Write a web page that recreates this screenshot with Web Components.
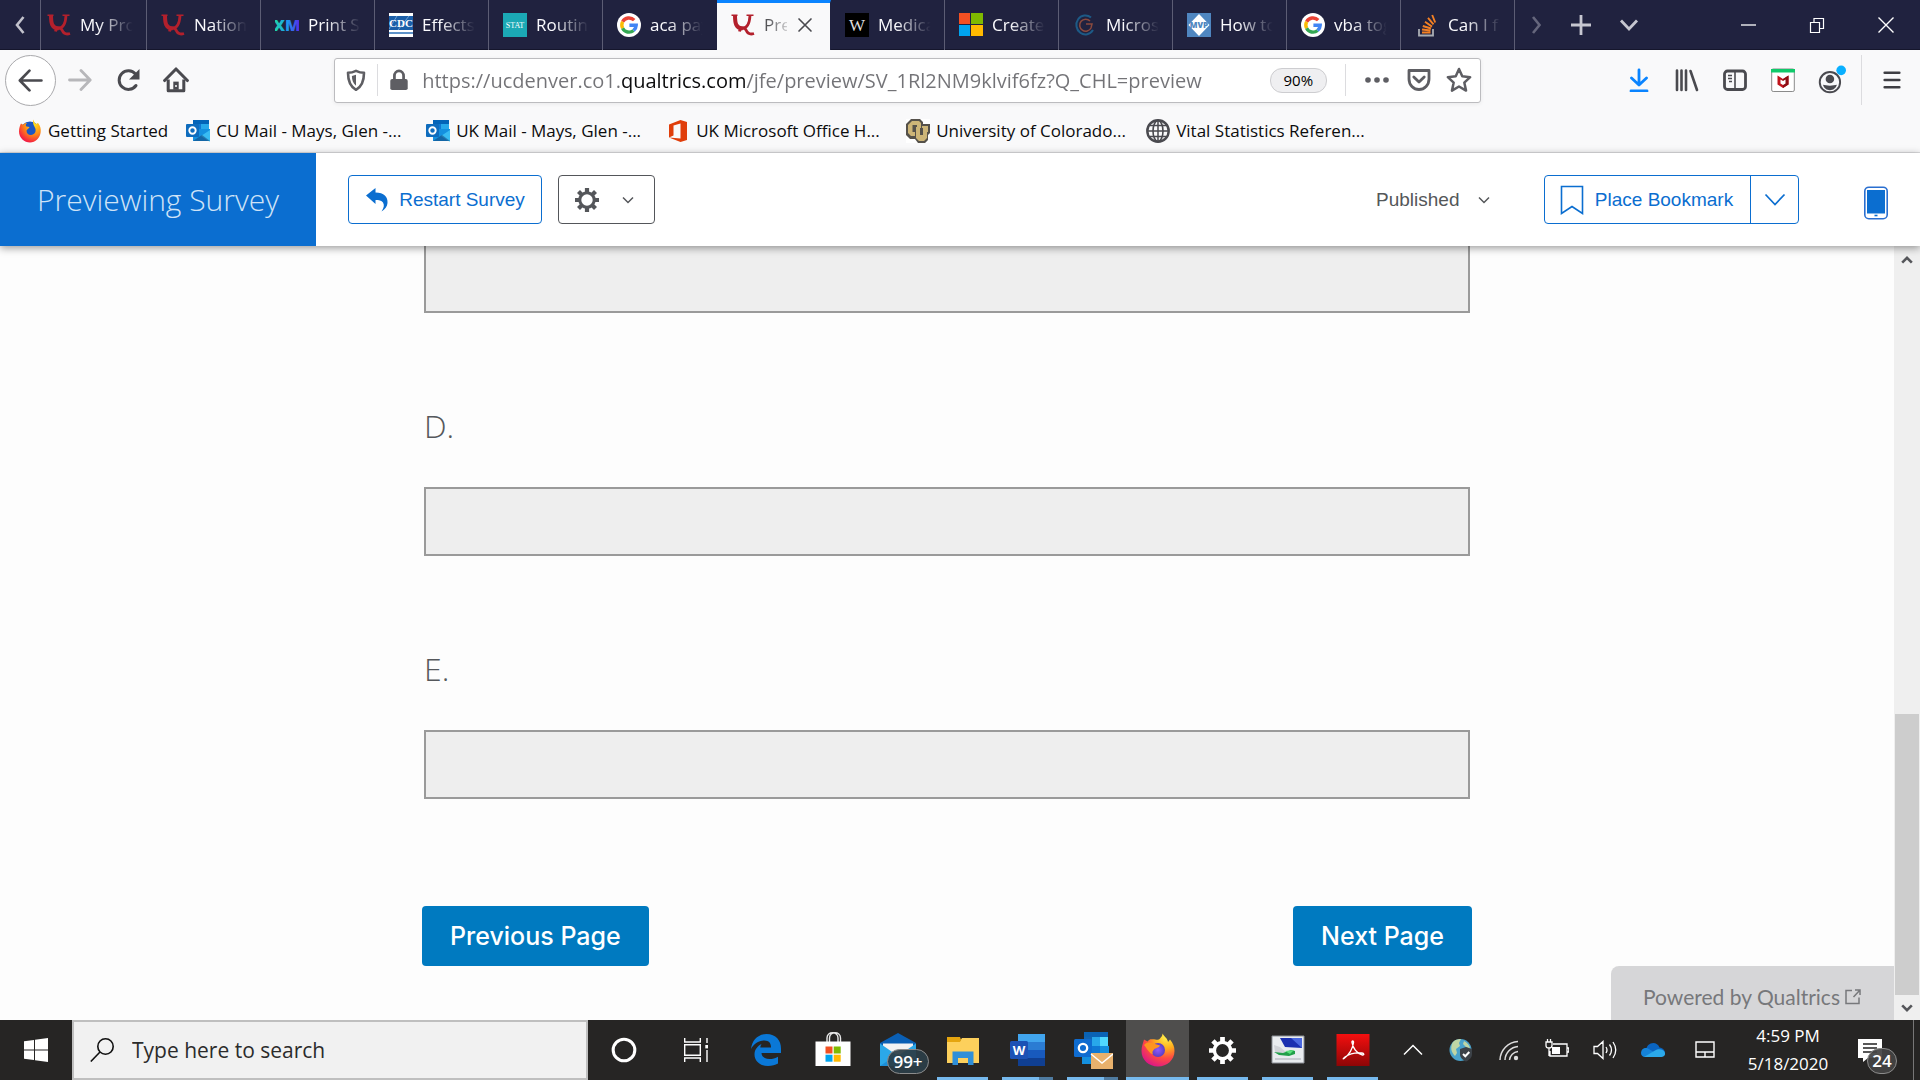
<!DOCTYPE html>
<html lang="en">
<head>
<meta charset="utf-8">
<title>Previewing Survey</title>
<style>
html, body { margin: 0; height: 100%; }
body { font-family: "Open Sans", "Noto Sans", sans-serif; background: #fdfdfd; overflow: hidden; }
</style>
</head>
<body>
<desktop-screen></desktop-screen>
<script>
const GOOGLE = `<circle cx="12" cy="12" r="12" fill="#fff"/><g fill="none" stroke-width="3.4"><path d="M17.2 7.2A7.2 7.2 0 0 0 5.6 8.8" stroke="#ea4335"/><path d="M5.6 8.8a7.2 7.2 0 0 0 0 6.4" stroke="#fbbc05"/><path d="M5.6 15.2a7.2 7.2 0 0 0 11 2.3" stroke="#34a853"/><path d="M16.6 17.5a7.2 7.2 0 0 0 2.6-5.2H12.4" stroke="#4285f4"/></g>`;
const QUAL = `<g fill="none" stroke="#b3202c"><path d="M.5 2.200h6M15.500 2.200h7" stroke-width="1.400"/><path d="M4 2.500c0 8 1 12.500 7.500 13" stroke-width="4"/><path d="M11 15.500c5 0 7.500-4.500 8-13" stroke-width="2.800"/><path d="M8.500 18.500c.5-4.500 5-4.500 6.500-1.500 1.500 3.500 3.500 5 8 3.500" stroke-width="2.800"/></g>`;
const OUTLOOK = `<path d="M7 1h16v10H7z" fill="#0364b8"/><path d="M7 5h8v6H7z" fill="#0f78d4"/><path d="M15 5h8v6h-8z" fill="#28a8ea"/><path d="M7 10h17v12H7z" fill="#1490df"/><path d="M24 11l-9 6 9 6z" fill="#50d9ff" opacity=".6"/><path d="M7 22l9-6 8 6z" fill="#123b6d" opacity=".5"/><rect x="0" y="5" width="13" height="13" rx="1" fill="#0f6cbd"/><circle cx="6.500" cy="11.500" r="3.200" fill="none" stroke="#fff" stroke-width="1.900"/>`;
const ICONS = {
  qualtrics: [24, QUAL],
  google: [24, GOOGLE],
  xm: [24, `<defs><linearGradient id="g"><stop offset="0" stop-color="#21dba0"/><stop offset=".5" stop-color="#1b9df0"/><stop offset="1" stop-color="#5a1fe8"/></linearGradient></defs><text x="12" y="18" text-anchor="middle" font-family="Open Sans" font-weight="800" font-size="16" fill="url(#g)">XM</text>`],
  cdc: [24, `<path fill="#fff" d="M0 0h24v24H0z"/><path fill="#1b5ea8" d="M0 3h24v14H0z"/><path fill="#5e93c9" d="M0 19h24v2H0z"/><path d="M0 16L8 3M9 17L20 3" stroke="#7fb0e0" stroke-width=".8"/><text x="12" y="13.500" text-anchor="middle" font-family="Liberation Serif" font-weight="700" font-size="11" fill="#fff">CDC</text>`],
  stat: [24, `<path fill="#1ba9b5" d="M0 0h24v24H0z"/><text x="12" y="15" text-anchor="middle" font-family="Liberation Serif" font-size="8" fill="#fff">STAT</text>`],
  w: [24, `<path fill="#000" d="M0 0h24v24H0z"/><text x="12" y="17.500" text-anchor="middle" font-family="Liberation Serif" font-size="17" fill="#ddd">W</text>`],
  microsoft: [24, `<path fill="#f25022" d="M0 0h11v11H0z"/><path fill="#7fba00" d="M12 0h12v11H12z"/><path fill="#00a4ef" d="M0 12h11v11H0z"/><path fill="#ffb900" d="M12 12h12v11H12z"/>`],
  swirl: [24, `<g fill="none" stroke-width="2"><path d="M18 4.500A9 9.500 0 1 0 20 17" stroke="#1d5a86"/><path d="M17 8a6 6 0 1 0 1 7l1-4h-6" stroke="#8a4a3e" stroke-width="1.500"/></g>`],
  mvp: [24, `<path fill="#4f86c0" d="M0 0h24v24H0z"/><path fill="#fff" d="M12 1l10.500 11L12 23 1.500 12z"/><text x="12" y="15" text-anchor="middle" font-family="Open Sans" font-weight="800" font-size="8" fill="#4f86c0">MVP</text>`],
  stack: [24, `<path d="M4 16v6.500h14V16" fill="none" stroke="#a9adb3" stroke-width="1.800"/><path d="M7 19.500h8.500M7 16.500l8.500 1M7.800 13l8.200 2.500M10 8.800l7 4.800M13 4.800l5.500 6.500M17.200 2l3 7.500" stroke="#f48024" stroke-width="1.900"/>`],
  left: [24, `<path d="M15.500 4L9 12l6.500 8" fill="none" stroke="#c2c2cc" stroke-width="2.600"/>`],
  right: [24, `<path d="M8 4l6.500 8L8 20" fill="none" stroke="#65667c" stroke-width="2.600"/>`],
  plus: [24, `<path d="M12 2v20M2 12h20" stroke="#c6c6d0" stroke-width="2.800"/>`],
  down: [24, `<path d="M4 7.500l8 8.500 8-8.500" fill="none" stroke="#c6c6d0" stroke-width="2.800"/>`],
  min: [24, `<path d="M5 12h15" stroke="#fff" stroke-width="1.300"/>`],
  restore: [24, `<path d="M5.500 9.500h9v10h-9zM9 9V5.500h9.500v10H15" fill="none" stroke="#fff" stroke-width="1.200"/>`],
  close: [24, `<path d="M4.500 4.500l15 15M19.500 4.500l-15 15" stroke="#fff" stroke-width="1.400"/>`],
  tabclose: [24, `<path d="M4 4l16 16M20 4L4 20" stroke="#4a4a4f" stroke-width="2.200" stroke-linecap="round"/>`],
  back: [24, `<path d="M22.500 12H2.500M11 2.500L1.800 12l9.200 9.500" fill="none" stroke="#4a4a4f" stroke-width="2.600" stroke-linecap="round" stroke-linejoin="round"/>`],
  fwd: [24, `<path d="M1.500 12h20M13 2.500l9.200 9.500-9.200 9.500" fill="none" stroke="#b7b7ba" stroke-width="2.800" stroke-linecap="round" stroke-linejoin="round"/>`],
  reload: [24, `<path d="M20 17.500A9.300 9.300 0 1 1 19.500 6" fill="none" stroke="#4a4a4f" stroke-width="3" stroke-linecap="round"/><path d="M23.500 1v10.500H13z" fill="#4a4a4f"/>`],
  home: [24, `<path d="M1.500 12.500L12 1.800l10.500 10.700" fill="none" stroke="#4a4a4f" stroke-width="2.800" stroke-linecap="round" stroke-linejoin="round"/><path d="M4.800 11.500V22h14.400V11.500" fill="none" stroke="#4a4a4f" stroke-width="2.800" stroke-linejoin="round"/><path d="M9.500 13.500h5V21h-5z" fill="#4a4a4f"/><circle cx="12" cy="17.500" r=".9" fill="#fff"/>`],
  shield: [24, `<path d="M12 2.800c3 1.500 5.500 2 8 2 0 8-1.500 13.500-8 17-6.500-3.500-8-9-8-17 2.500 0 5-.5 8-2z" fill="none" stroke="#5e5e63" stroke-width="2.600" stroke-linejoin="round"/><path d="M12 6.800v11c-3-2.500-4-5.500-4.100-9.800z" fill="#5e5e63"/>`],
  lock: [24, `<rect x="2.500" y="11" width="19" height="12" rx="2" fill="#5e5e63"/><path d="M7 12V7.500a5 5.500 0 0 1 10 0V12" fill="none" stroke="#5e5e63" stroke-width="3"/>`],
  dots: [24, `<g fill="#5e5e63"><circle cx="3" cy="12" r="2.800"/><circle cx="12" cy="12" r="2.800"/><circle cx="21" cy="12" r="2.800"/></g>`],
  pocket: [24, `<path d="M2 2.500h20v8.500a10 10.500 0 0 1-20 0z" fill="none" stroke="#5e5e63" stroke-width="2.800" stroke-linejoin="round"/><path d="M6.800 9l5.200 5 5.200-5" fill="none" stroke="#5e5e63" stroke-width="2.800" stroke-linecap="round" stroke-linejoin="round"/>`],
  star: [24, `<path d="M12 1.800l3 6.800 7.300.8-5.400 5 1.600 7.400L12 18l-6.500 3.800 1.600-7.400-5.400-5 7.300-.8z" fill="none" stroke="#5e5e63" stroke-width="2.300" stroke-linejoin="round"/>`],
  download: [24, `<path d="M12 2v14M4.500 10l7.500 7 7.500-7M4 23h16" fill="none" stroke="#0a84ff" stroke-width="2.800" stroke-linecap="round" stroke-linejoin="round"/>`],
  library: [24, `<path d="M2 2.500v19.500M6.500 2.500v19.500M11 2.500v19.500M15.500 3l6.500 19" stroke="#4a4a4f" stroke-width="2.600" stroke-linecap="round"/>`],
  sidebar: [24, `<rect x="1.500" y="3" width="21" height="18.500" rx="3" fill="none" stroke="#4a4a4f" stroke-width="2.800"/><path d="M12 3v18M5 7.500h4M5 10.500h4M6 13.500h3" stroke="#4a4a4f" stroke-width="1.600"/>`],
  mcafee: [24, `<rect x=".7" y="1" width="22.600" height="22.500" rx="1.500" fill="#fff" stroke="#8b8b8b"/><path d="M0 1h24v3.500H0z" fill="#10c96a"/><path d="M6.500 7.500L12 11l5.500-3.500v9L12 20l-5.500-3.500z" fill="#c0141c"/><path d="M12 11l5.500-3.500v9L12 20z" fill="#8e0e14"/><path d="M9.500 11.500l2.500 1.600 2.500-1.600v4l-2.500 1.500-2.500-1.500z" fill="#fff"/>`],
  account: [28, `<circle cx="13" cy="16" r="9.500" fill="none" stroke="#4a4a4f" stroke-width="1.800"/><circle cx="13" cy="13" r="4" fill="#4a4a4f"/><path d="M6.500 18.500c3 1 10 1 13 0-1 3.500-3.500 5-6.500 5s-5.500-1.500-6.500-5z" fill="#4a4a4f"/><circle cx="23.500" cy="5" r="4.500" fill="#0ab0ff"/>`],
  menu: [24, `<path d="M4 4h16M4 12h16M4 20h16" stroke="#3e3e43" stroke-width="2.800" stroke-linecap="round"/>`],
  firefox: [34, `<defs><radialGradient id="f" cx=".75" cy=".1" r="1"><stop offset="0" stop-color="#fff44f"/><stop offset=".35" stop-color="#ffae1c"/><stop offset=".65" stop-color="#ff4a42"/><stop offset="1" stop-color="#d9138c"/></radialGradient><radialGradient id="p"><stop offset="0" stop-color="#9059ff"/><stop offset="1" stop-color="#5b3ec2"/></radialGradient></defs><path d="M21.500.5c1.500 3 5 4.500 5.500 8.500l2-2.500c3 3.500 4.500 7 4.500 11.500C33.500 27 26 33.500 17 33.500S.5 27 .5 18c0-4.500 1.500-8 2.500-11.500l3.500 2C8 6.500 9.500 6 11 6.200c4-.2 5.500 2 8-.7 1.500-1.500 2.500-3 2.500-5z" fill="url(#f)"/><circle cx="17" cy="17" r="7" fill="url(#p)"/><path d="M3 12c4-4 8-2 11-1l5 1.500c-1 2.500-4 2-6 4-1.500 1.500-2 3-1 5-4-1.500-6-6-9-9.500z" fill="#ff9420"/>`],
  ffold: [24, `<defs><radialGradient id="f" cx=".7" cy=".2" r="1"><stop offset="0" stop-color="#ffe21f"/><stop offset=".45" stop-color="#ff8a16"/><stop offset=".8" stop-color="#f5233f"/><stop offset="1" stop-color="#d4116c"/></radialGradient></defs><circle cx="12" cy="12.500" r="10" fill="#1b57c4"/><path d="M15 .5c1 2 1.500 3 3 4.500l2-1c2.500 3 3 6 2.700 9C22 19 17.500 23.500 12 23.500S1 19 1 12.500C1 9 2 6.500 3 4.500l2 1.200c1-1 2.300-1.700 4-1.700-1.500 1.200-1.500 2.500-.5 3.500l3 .5c-.5 1.500-2 1.700-3 3.500 0 3 2 4.700 4.500 4.500 3.500-.3 5-3 4.500-6-.3-2-3-4-2.500-9.500z" fill="url(#f)"/>`],
  outlook: [24, OUTLOOK],
  office: [24, `<path d="M3 5.500L14.500 1 21 3v18l-6.500 2L3 18.500l11.500 1V4.500L7.500 6.500v10L3 18.500z" fill="#e03e0b"/>`],
  cu: [24, `<path d="M0 0h24v24H0z" fill="#fff"/><path d="M5 0h9l3 3v2h7v9l-2 2v5l-3 3h-7l-3-4H4l-4-4V5z" fill="#55514a"/><path d="M6 2h7l2 2v5h-4V6H6.500v7H9v4H5l-3-3V6z" fill="#cdb577"/><path d="M10 8h4v8h3V9h-1V7h6v6h-1v6l-3 3h-5l-3-3z" fill="#cdb577"/>`],
  globe: [24, `<g fill="none" stroke="#4a4a4f"><circle cx="12" cy="12" r="10.700" stroke-width="2.400"/><ellipse cx="12" cy="12" rx="5" ry="10.500" stroke-width="1.600"/><path d="M12 1v22M1.500 12h21M3.500 6.500h17M3.500 17.500h17" stroke-width="1.500"/></g>`],
  undo: [24, `<path d="M1 7.500L10.500 0v4.500C19 4.500 23 9 22.500 15c-.2 3.500-2.500 6.500-6 8.500 2.500-4 3-6.500 1.500-9-1.500-2-4-2.500-7.500-2.500v4z" fill="#0b6ed0"/>`],
  gear: [24, `<circle cx="12" cy="12" r="7.200" fill="none" stroke="currentColor" stroke-width="3"/><g stroke="currentColor" stroke-width="4.200"><path d="M12 0v5M12 19v5M0 12h5M19 12h5M3.500 3.500L7 7M17 17l3.500 3.500M20.500 3.500L17 7M7 17l-3.500 3.500"/></g>`],
  caret: [16, `<path d="M3 5.500l5 5 5-5" fill="none" stroke="currentColor" stroke-width="1.500"/>`],
  caretwide: [24, `<path d="M2.500 6.500l9.500 10 9.500-10" fill="none" stroke="currentColor" stroke-width="1.700"/>`],
  bookmark: [30, `<path d="M4.500 1.500h21v27L15 21.500 4.500 28.500z" fill="none" stroke="#0b6ed0" stroke-width="1.600"/>`],
  phone: [34, `<rect x="5.800" y="1.200" width="22.400" height="31.500" rx="4" fill="#fff" stroke="#2a6fd0" stroke-width="1.600"/><path d="M8 4h18v23.500H8z" fill="#0b6ed0"/><path d="M15.500 29.500h3" stroke="#0b6ed0" stroke-width="1.600"/>`],
  up3: [16, `<path d="M2.500 11L8 5.500l5.500 5.500" fill="none" stroke="#55565a" stroke-width="3"/>`],
  down3: [16, `<path d="M2.500 5L8 10.500 13.500 5" fill="none" stroke="#55565a" stroke-width="3"/>`],
  ext: [18, `<path d="M8 2.500H2v13h13v-6M11 2h5v5M16 2L9.500 9" fill="none" stroke="#77787b" stroke-width="1.500"/>`],
  windows: [24, `<path d="M0 3.300L10 2v9.500H0zM11 1.800L24 0v11.500H11zM0 12.500h10V22L0 20.700zM11 12.500h13V24l-13-1.800z" fill="#fff"/>`],
  search: [24, `<circle cx="15.500" cy="8.500" r="7.700" fill="none" stroke="#111" stroke-width="1.600"/><path d="M10 14L.8 23.500" stroke="#111" stroke-width="1.600"/>`],
  cortana: [24, `<circle cx="12" cy="12" r="10" fill="none" stroke="#fff" stroke-width="2.800"/>`],
  taskview: [24, `<g fill="none" stroke="#fff" stroke-width="1.400"><path d="M.7 0v4h15.600V0M.7 24v-4h15.600v4M.7 6.700h15.600v10.600H.7zM23 0v5M23 12v12"/></g><path d="M21.300 7h3v3.400h-3z" fill="#fff"/>`],
  edge: [32, `<path d="M1 15C2 6 8 0 16.500 0 26 0 31 6.500 31 14.500V19H11.500c.3 4 3.500 6 8 6 3 0 6-.8 8.500-2.300V29.500c-2.700 1.600-6 2.500-10 2.500C10 32 4.500 27 4.500 20.500c0-5 3-8.500 7-10.500-.8 1.300-1 2.200-1.200 3.500H21c.2-4-2-7-6.500-7C8.500 6.500 3.500 10 1 15z" fill="#0a78d7"/>`],
  store: [36, `<path d="M12 10V6c0-7 11-7 11 0v4M14.500 10V6c0-7 11-7 11 0v4" fill="none" stroke="#e8e8e8" stroke-width="1.400"/><path d="M.5 9.500h35V34h-35z" fill="#fff"/><path d="M10.500 14.500h7v7h-7z" fill="#f25022"/><path d="M18.700 14.500h7v7h-7z" fill="#7fba00"/><path d="M10.500 22.700h7v7h-7z" fill="#00a4ef"/><path d="M18.700 22.700h7v7h-7z" fill="#ffb900"/>`],
  mail: [36, `<path d="M0 11L18 1l18 10v4H0z" fill="#0a5fb4"/><path d="M3 11.500h30v14H3z" fill="#f3f3f3"/><path d="M0 11.500L18 24l18-12.500V34H0z" fill="#2ba8e8"/><path d="M0 34l18-12 18 12z" fill="#1b8fd8"/>`],
  explorer: [34, `<path d="M1 4h12l2 3H1z" fill="#dd9a06"/><path d="M1 8h13l2-3h17v25H1z" fill="#fdd05c"/><path d="M1 4h13l1 3-1 2H1z" fill="#e5a50f"/><path d="M6.500 18.500h21V32H22v-7H12v7H6.500z" fill="#2f8fd8"/>`],
  word: [36, `<path d="M8 2h27v8H8z" fill="#41a5ee"/><path d="M8 10h27v8H8z" fill="#2b7cd3"/><path d="M8 18h27v8H8z" fill="#185abd"/><path d="M8 26h27v8H8z" fill="#103f91"/><rect x="0" y="9" width="18" height="18" rx="1.500" fill="#1c52b5"/><text x="9" y="23" text-anchor="middle" font-family="Open Sans" font-weight="700" font-size="13" fill="#fff">W</text>`],
  outlookbig: [40, `<path d="M11 2h24v12H11z" fill="#0a63b5"/><path d="M11 7h8v9h-8z" fill="#1066b5"/><path d="M19 7h8v9h-8z" fill="#28a8ea"/><path d="M27 7h8v9h-8z" fill="#50d9ff"/><path d="M9 16h27v18H9z" fill="#1490df"/><path d="M19 16h8v8h-8z" fill="#0f78d4"/><rect x="1" y="9" width="18" height="18" rx="1.500" fill="#0f6cd0"/><circle cx="10" cy="18" r="4.200" fill="none" stroke="#fff" stroke-width="2.300"/><path d="M18 23h22v16H18z" fill="#e9b16c"/><path d="M18 24l11 9 11-9" fill="none" stroke="#fff" stroke-width="1.400"/>`],
  remote: [34, `<path d="M1 3h32v27H1z" fill="#e9ecef" stroke="#8b9096"/><path d="M9 5h22v10l-17-1z" fill="#1a2fb0"/><path d="M20 5h11v10z" fill="#4a68e0"/><path d="M3 12l6 2 6 5-5 3-6-3z" fill="#d0d3d8"/><path d="M3 19l9 1 8-3 4 1v3l-6 2-10-1z" fill="#22a04a"/><path d="M14 18l9-1-4 4z" fill="#5be07c"/><path d="M4 26h26" stroke="#c8ccd2" stroke-width="2"/>`],
  acrobat: [34, `<defs><linearGradient id="a" x2="0" y2="1"><stop offset="0" stop-color="#f40f0f"/><stop offset="1" stop-color="#8d0606"/></linearGradient></defs><path d="M.5 1h33v32H.5z" fill="url(#a)"/><path d="M8 25.500c4-3 8.500-9 9.500-16 .2-2-1.800-2-1.500 0 .8 5 4.500 11 10.500 12.500 2 .2 1.500-1.800-.5-2-6-.5-13 1-17 4-1.500 1.300-2.500 2.500-1 1.500z" fill="none" stroke="#fff" stroke-width="1.400"/>`],
  tup: [24, `<path d="M3 16.500l9-9 9 9" fill="none" stroke="#fff" stroke-width="1.500"/>`],
  world: [24, `<circle cx="11.500" cy="12" r="11" fill="#4aa3cc"/><path d="M4 4c3-3 6-3 8-3l-2 4 1 3-4 3 1 4-2 3C2 14 1 9 4 4zM15 3c4 2 6 5 6 8l-4-2-3-3z" fill="#bfd6a5"/><path d="M17 9l6 2v5c0 4-3 6-6 7.500-3-1.500-6-3.500-6-7.500v-5z" fill="#3c4248"/><path d="M14 16l2.300 2.300L20.300 14" fill="none" stroke="#fff" stroke-width="2"/>`],
  wifi: [24, `<g fill="none" stroke="#ddd" stroke-width="1.500"><path d="M3 22A19 19 0 0 1 21 3.500"/><path d="M8 22A14 14 0 0 1 21 8.500"/><path d="M12.500 22A9.500 9.500 0 0 1 21 13.500"/></g><circle cx="19" cy="20" r="2.200" fill="#ddd"/>`],
  battery: [24, `<path d="M8 6h14v12H5v-5M22.300 10h1.500v4h-1.500M1 4h6v3.500c0 1.700-1 2.500-3 2.500s-3-.8-3-2.500zM2.500 4V1M5.500 4V1M4 10v8" fill="none" stroke="#fff" stroke-width="1.300"/><path d="M7 9h8v7H7z" fill="#fff"/>`],
  volume: [24, `<path d="M1 8.500h3.500L10 3.500v17l-5.500-5H1zM13 9q2 3 0 6M16.500 6.500q4 5.500 0 11M20 4q5.500 8 0 16" fill="none" stroke="#fff" stroke-width="1.300"/>`],
  onedrive: [24, `<path d="M5 13c0-9 11-11 13.500-3.500 3.500.5 5.500 3 5.500 5.500H2z" fill="#0a64c0"/><path d="M0 15c0-4 4-6 7-4.500L21 19H4c-2.500 0-4-1.700-4-4z" fill="#1583d9"/><path d="M3 19l11-6.500c3-2 9-2 10 2.500.5 2.500-1.500 4-3.500 4z" fill="#2ba9ea"/>`],
  touchpad: [24, `<path d="M3 4h18v15H3zM3 14h18M12 14v5" fill="none" stroke="#fff" stroke-width="1.400"/>`],
  notes: [24, `<path d="M0 1h24v19H10l-5 4v-4H0z" fill="#fff"/><path d="M5 6h14M5 10h14M5 14h14" stroke="#222" stroke-width="1.300"/>`],
};

const define = (name, css, html) => customElements.define(name, class extends HTMLElement {
  constructor() {
    super();
    const template = document.createElement('template');
    template.innerHTML = `<style>*{box-sizing:border-box}button,input,select{font:inherit;color:inherit;margin:0;padding:0;border:0;background:none}button{display:flex;align-items:center;justify-content:center}${css}</style>` +
      (typeof html === 'function' ? html(this) : html);
    this.attachShadow({ mode: 'open' }).append(template.content.cloneNode(true));
  }
});

customElements.define('ui-icon', class extends HTMLElement {
  connectedCallback() {
    if (this.shadowRoot) return;
    const [box, body] = ICONS[this.getAttribute('name')];
    const size = this.getAttribute('size') || 24;
    this.attachShadow({ mode: 'open' }).innerHTML =
      `<style>:host{display:block;flex:none;width:${size}px;height:${size}px}svg{display:block}</style><svg aria-hidden="true" width="${size}" height="${size}" viewBox="0 0 ${box} ${box}">${body}</svg>`;
  }
});

define('browser-tab', `
  :host{display:flex;align-items:center;gap:9px;width:114px;height:50px;padding:0 6px 0 14px;border-right:1px solid #5c5d74;color:#fbfbfe;font-size:17px}
  :host([first]){width:106px;padding-left:6px}
  :host([before]){border-right-color:#20223f}
  :host([active]){background:#f9f9fa;color:#2a2a2e;border-right-color:#20223f;border-top:3px solid #0a84ff;padding-right:16px;padding-bottom:3px}
  span{flex:1;min-width:0;overflow:hidden;white-space:nowrap;line-height:24px;mask-image:linear-gradient(90deg,#000 30%,transparent 88%)}
  :host([active]) span{mask-image:linear-gradient(90deg,#000c 20%,#0003)}
`, '<slot name="icon"></slot><span><slot></slot></span><slot name="end"></slot>');

const TABS = [['qualtrics', 'My Pro', 'first'], ['qualtrics', 'Nation'], ['xm', 'Print S'], ['cdc', 'Effects'], ['stat', 'Routin'], ['google', 'aca pay', 'before'], ['qualtrics', 'Pre', 'active'], ['w', 'Medica'], ['microsoft', 'Create'], ['swirl', 'Micros'], ['mvp', 'How to'], ['google', 'vba tog'], ['stack', 'Can I f']];
define('tab-strip', `
  :host{display:flex;height:50px;background:#20223f;border-bottom:1px solid #15162c}
  button{height:50px}
  .prev{width:41px;border-right:1px solid #5c5d74}
  .next{width:43px}.add{width:46px}.list{width:50px}
  .win{width:69px}
  .gap{flex:1}
  .x{height:24px}
  browser-tab{flex:none}
`, '<button class="prev" aria-label="Scroll tabs left"><ui-icon name="left" size="24"></ui-icon></button>' +
  TABS.map(([icon, text, flag]) => `<browser-tab ${flag || ''}><ui-icon slot="icon" name="${icon}"></ui-icon>${text}${flag === 'active' ? '<button class="x" slot="end" aria-label="Close tab"><ui-icon name="tabclose" size="18"></ui-icon></button>' : ''}</browser-tab>`).join('') +
  `<button class="next" aria-label="Scroll tabs right"><ui-icon name="right"></ui-icon></button>
   <button class="add" aria-label="New tab"><ui-icon name="plus"></ui-icon></button>
   <button class="list" aria-label="List all tabs"><ui-icon name="down"></ui-icon></button>
   <div class="gap"></div>
   <button class="win" aria-label="Minimize"><ui-icon name="min"></ui-icon></button>
   <button class="win" aria-label="Restore"><ui-icon name="restore"></ui-icon></button>
   <button class="win" aria-label="Close"><ui-icon name="close"></ui-icon></button>`);

define('nav-toolbar', `
  :host{display:flex;align-items:center;height:60px;padding:0 4px 0 5px;background:#f9f9fa}
  button{flex:none;width:48px;height:48px}
  .back{width:51px;height:51px;border:1px solid #a9a9ac;border-radius:50%;background:#fff}
  .gap{flex:1}
  .url{display:flex;align-items:center;width:60%;max-width:1148px;height:45px;background:#fff;border:1px solid #bcbcbf;border-radius:3px;box-shadow:0 1px 4px #0001}
  .url button{width:42px;height:42px}
  .rule{width:1px;height:32px;background:#dcdcdf}
  input{flex:1;min-width:0;height:40px;padding-left:2px;font-size:20px;outline:0;color:#737377;-webkit-text-fill-color:transparent;background:linear-gradient(90deg,#737377 200px,#0c0c0d 200px 325px,#737377 325px);-webkit-background-clip:text;background-clip:text}
  .url .zoom{width:57px;height:25px;margin-right:18px;border:1px solid #cdcdd0;border-radius:12px;background:#efeff1;font-size:15px}
  .url .actions{width:62px}
  .url .save{width:22px}
  .url .mark{width:50px;padding-left:8px}
  .tall{height:50px;margin:0 6px}
`, `<button class="back" aria-label="Back"><ui-icon name="back" size="25"></ui-icon></button>
  <button aria-label="Forward"><ui-icon name="fwd"></ui-icon></button>
  <button aria-label="Reload"><ui-icon name="reload"></ui-icon></button>
  <button aria-label="Home"><ui-icon name="home" size="26"></ui-icon></button>
  <div class="gap"></div>
  <div class="url">
    <button aria-label="Tracking protection"><ui-icon name="shield"></ui-icon></button><div class="rule"></div>
    <button aria-label="Connection secure"><ui-icon name="lock" size="22"></ui-icon></button>
    <input aria-label="Address" value="https://ucdenver.co1.qualtrics.com/jfe/preview/SV_1Rl2NM9klvif6fz?Q_CHL=preview">
    <button class="zoom">90%</button><div class="rule"></div>
    <button class="actions" aria-label="Page actions"><ui-icon name="dots"></ui-icon></button>
    <button class="save" aria-label="Save to Pocket"><ui-icon name="pocket"></ui-icon></button>
    <button class="mark" aria-label="Bookmark this page"><ui-icon name="star" size="26"></ui-icon></button>
  </div>
  <div class="gap"></div>
  <button aria-label="Downloads"><ui-icon name="download"></ui-icon></button>
  <button aria-label="Library"><ui-icon name="library"></ui-icon></button>
  <button aria-label="Sidebars"><ui-icon name="sidebar"></ui-icon></button>
  <button aria-label="McAfee"><ui-icon name="mcafee"></ui-icon></button>
  <button aria-label="Account"><ui-icon name="account" size="30"></ui-icon></button>
  <div class="rule tall"></div>
  <button aria-label="Menu"><ui-icon name="menu" size="22"></ui-icon></button>`);

const MARKS = [['ffold', 'Getting Started'], ['outlook', 'CU Mail - Mays, Glen -...'], ['outlook', 'UK Mail - Mays, Glen -...'], ['office', 'UK Microsoft Office H...'], ['cu', 'University of Colorado...'], ['globe', 'Vital Statistics Referen...']];
define('bookmark-bar', `
  :host{display:flex;align-items:center;gap:18px;height:43px;padding:0 18px;background:#f9f9fa;border-bottom:1px solid #dedee0;font-size:17px;color:#0c0c0d}
  a{display:flex;align-items:center;gap:6px;min-width:222px;color:inherit;text-decoration:none;white-space:nowrap;line-height:24px}
  a:first-of-type{min-width:0}
`, MARKS.map(([icon, text]) => `<a href="#"><ui-icon name="${icon}"></ui-icon>${text}</a>`).join(''));

define('preview-header', `
  :host{display:flex;align-items:center;height:93px;background:#fff;box-shadow:0 2px 8px #0006;position:relative;z-index:1;font-family:"Liberation Sans",sans-serif;font-size:19px;color:#545759}
  h1{display:flex;align-items:center;justify-content:center;width:316px;height:100%;margin:0 32px 0 0;background:#0b6ed0;color:#cfe3f7;font:300 30px "Open Sans",sans-serif;white-space:nowrap}
  button{height:49px;border-radius:4px;white-space:nowrap}
  .restart{gap:10px;width:194px;border:1px solid #0b6ed0;color:#0b6ed0}
  .gear{gap:21px;width:97px;margin-left:16px;padding-right:2px;border:1px solid #54565a;color:#54565a}
  .gap{flex:1}
  .status{display:flex;align-items:center;gap:16px}
  select{appearance:none;outline:0}
  .split{display:flex;margin:0 60px 0 52px;border:1px solid #0b6ed0;border-radius:4px;color:#0b6ed0}
  .split button{height:47px}
  .place{width:206px;gap:8px;padding-right:5px;border-right:1px solid #0b6ed0;border-radius:0}
  .more{width:47px}
  .phone{margin-right:27px;padding-top:6px}
`, `<h1>Previewing Survey</h1>
  <button class="restart"><ui-icon name="undo"></ui-icon>Restart Survey</button>
  <button class="gear" aria-label="Tools"><ui-icon name="gear"></ui-icon><ui-icon name="caret" size="16"></ui-icon></button>
  <div class="gap"></div>
  <label class="status"><select aria-label="Version"><option>Published</option></select><ui-icon name="caret" size="16"></ui-icon></label>
  <div class="split"><button class="place"><ui-icon name="bookmark" size="30"></ui-icon>Place Bookmark</button><button class="more" aria-label="More bookmark options"><ui-icon name="caretwide" size="24"></ui-icon></button></div>
  <button class="phone" aria-label="Mobile view"><ui-icon name="phone" size="34"></ui-icon></button>`);

define('survey-question', `
  :host{display:flex;flex-direction:column;margin:0 2px}
  label{margin:91px 0 39px;font-size:32px;line-height:44px;font-weight:300;color:#55585c}
  input{width:100%;height:69px;padding:0 16px;border:2px solid #9a9a9a;background:#eee;font-size:28px}
`, el => el.hasAttribute('label')
  ? `<label for="answer">${el.getAttribute('label')}</label><input id="answer" type="text">`
  : '<input type="text" aria-label="Answer">');

define('page-scrollbar', `
  :host{display:flex;flex-direction:column;width:26px;background:#efefef}
  button{height:28px;width:25px}
  .track{flex:1;display:flex;flex-direction:column;justify-content:flex-end}
  .thumb{height:39%;margin:0 1px;background:#cdcdcd}
  .end{height:25px}
`, `<button aria-label="Scroll up"><ui-icon name="up3" size="14"></ui-icon></button><div class="track"><div class="thumb"></div></div><button class="end" aria-label="Scroll down"><ui-icon name="down3" size="14"></ui-icon></button>`);

define('survey-page', `
  :host{display:flex;flex:1;min-height:0;background:#fdfdfd}
  main{position:relative;flex:1;display:flex;flex-direction:column;align-items:center;justify-content:flex-end;overflow:hidden;padding-bottom:54px}
  form{width:100%;max-width:1050px}
  nav{display:flex;justify-content:space-between;margin-top:107px}
  nav button{height:60px;padding:0 28px;border-radius:4px;background:#007ac0;color:#fff;font:500 25px Inter,sans-serif}
  .brand{position:absolute;right:0;bottom:0;display:flex;align-items:center;justify-content:center;gap:4px;width:283px;height:54px;padding-top:7px;border-radius:8px 0 0 0;background:#d6d6d8;color:#77787b;font:21px Lato,sans-serif;text-decoration:none}
`, `<main><form><survey-question></survey-question><survey-question label="D."></survey-question><survey-question label="E."></survey-question><nav><button type="button">Previous Page</button><button type="button">Next Page</button></nav></form><a class="brand" href="#">Powered by Qualtrics<ui-icon name="ext" size="18"></ui-icon></a></main><page-scrollbar></page-scrollbar>`);

define('task-button', `
  :host{display:flex;width:65px;height:60px}
  button{position:relative;width:100%;height:60px}
  :host([open]) button::after{content:"";position:absolute;left:7px;right:7px;bottom:0;height:3px;background:#76b9ed}
  :host([stack]) button::after{background:linear-gradient(90deg,#76b9ed 37px,#4f7ba0 37px)}
  :host([active]) button{background:#4f4e4d;margin:0 1px}
  :host([active]) button::after{left:0;right:0}
`, '<button><slot></slot></button>');

define('task-bar', `
  :host{display:flex;align-items:center;height:60px;background:#262524;color:#fff}
  .start{width:72px;height:60px}
  .search{display:flex;align-items:center;gap:18px;width:516px;height:60px;padding-left:16px;border:2px solid #bfbfbf;background:#f1f1f1;font-size:21px}
  input{flex:1;min-width:0;outline:0;color:#2b2b2b}
  input::placeholder{color:#2b2b2b;opacity:1}
  .wide{width:72px}
  .edge{width:68px}
  .badge{position:absolute;left:22px;bottom:6px;width:42px;height:25px;border:1px solid #8c8c8c;border-radius:13px;background:#2c3e48ee;font-size:17px;font-weight:600;line-height:23px;text-align:center}
  .gap{flex:1}
  .tray{display:flex;align-items:center}
  .tray button{width:48px;height:60px}
  .tray .last{width:56px}
  .clock{display:flex;flex-direction:column;width:110px;text-align:center;font-size:17px;line-height:28px}
  .note{position:relative;display:flex;width:70px;padding-left:15px}
  .note .badge{left:24px;bottom:-12px;width:30px;height:26px;background:#444e}
  .show{width:7px;height:60px;border-left:1px solid #777}
`, `<button class="start" aria-label="Start"><ui-icon name="windows"></ui-icon></button>
  <label class="search"><ui-icon name="search"></ui-icon><input placeholder="Type here to search" aria-label="Type here to search"></label>
  <task-button class="wide"><ui-icon name="cortana" size="26"></ui-icon></task-button>
  <task-button class="wide"><ui-icon name="taskview"></ui-icon></task-button>
  <task-button class="edge"><ui-icon name="edge" size="32"></ui-icon></task-button>
  <task-button><ui-icon name="store" size="36"></ui-icon></task-button>
  <task-button><ui-icon name="mail" size="36"></ui-icon><span class="badge">99+</span></task-button>
  <task-button open><ui-icon name="explorer" size="34"></ui-icon></task-button>
  <task-button open stack><ui-icon name="word" size="36"></ui-icon></task-button>
  <task-button open stack><ui-icon name="outlookbig" size="40"></ui-icon></task-button>
  <task-button open active><ui-icon name="firefox" size="34"></ui-icon></task-button>
  <task-button open><ui-icon name="gear" size="27"></ui-icon></task-button>
  <task-button open><ui-icon name="remote" size="34"></ui-icon></task-button>
  <task-button open><ui-icon name="acrobat" size="34"></ui-icon></task-button>
  <div class="gap"></div>
  <div class="tray">
    <button aria-label="Show hidden icons"><ui-icon name="tup"></ui-icon></button>
    <button aria-label="Network security"><ui-icon name="world"></ui-icon></button>
    <button aria-label="Wi-Fi"><ui-icon name="wifi"></ui-icon></button>
    <button aria-label="Battery"><ui-icon name="battery"></ui-icon></button>
    <button aria-label="Volume"><ui-icon name="volume"></ui-icon></button>
    <button aria-label="OneDrive"><ui-icon name="onedrive"></ui-icon></button>
    <button class="last" aria-label="Touchpad"><ui-icon name="touchpad"></ui-icon></button>
    <div class="clock"><span>4:59 PM</span><span>5/18/2020</span></div>
    <div class="note"><ui-icon name="notes"></ui-icon><span class="badge">24</span></div>
    <div class="show"></div>
  </div>`);

define('desktop-screen', `
  :host{display:flex;flex-direction:column;height:100vh}
  tab-strip,nav-toolbar,bookmark-bar,preview-header,task-bar{flex:none}
`, '<tab-strip></tab-strip><nav-toolbar></nav-toolbar><bookmark-bar></bookmark-bar><preview-header></preview-header><survey-page></survey-page><task-bar></task-bar>');
</script>
</body>
</html>
